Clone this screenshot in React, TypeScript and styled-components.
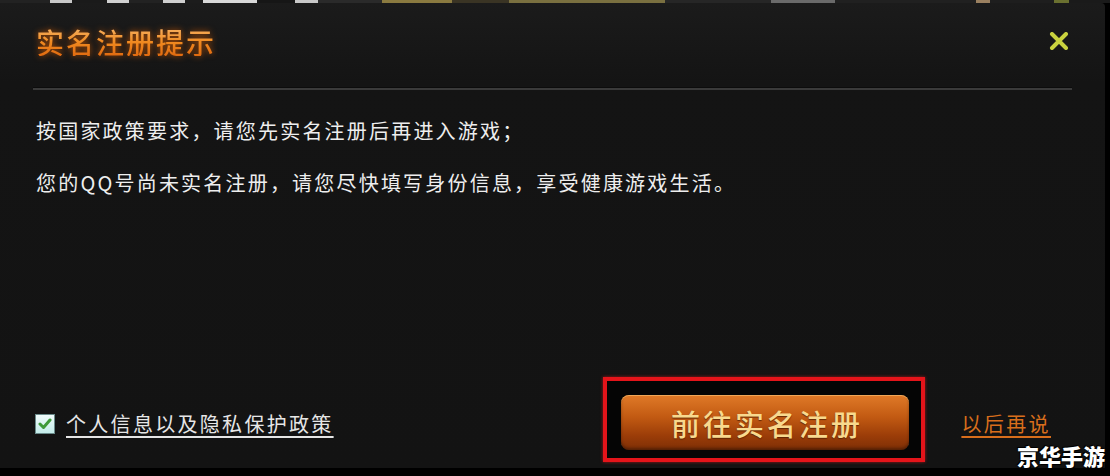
import React from "react";
import styled, { createGlobalStyle } from "styled-components";

const Global = createGlobalStyle`
  html, body { margin: 0; padding: 0; background: #000; }
  body { font-family: "Noto Sans CJK SC", "Noto Sans", sans-serif; }
`;

const Frame = styled.div`
  position: relative;
  width: 1110px;
  height: 476px;
  display: flex;
  flex-direction: column;
  background: #000;
  overflow: hidden;
`;

const TopStrip = styled.div`
  height: 3px;
  display: flex;
  background: #1a1a1a;
`;

const StripSeg = styled.div<{ $w: number; $c: string }>`
  width: ${(p) => p.$w}px;
  background: ${(p) => p.$c};
  flex: none;
`;

const MainRow = styled.div`
  flex: 1;
  display: flex;
  padding-right: 5px;
  padding-bottom: 8px;
`;

const Dialog = styled.div`
  flex: 1;
  display: flex;
  flex-direction: column;
  padding: 0 33px;
  background: linear-gradient(180deg, #1b1b1b 0px, #141414 80px, #131313 100%);
  border-top-right-radius: 4px;
`;

const Header = styled.div`
  height: 84px;
  display: flex;
  align-items: center;
  justify-content: space-between;
  padding: 0 2px 0 3px;
`;

const Title = styled.h1`
  margin: 0;
  font-size: 28px;
  line-height: 1;
  font-weight: 500;
  letter-spacing: 2px;
  color: #f08a22;
  background: linear-gradient(180deg, #f7b060 0%, #f08a20 50%, #e06a10 100%);
  -webkit-background-clip: text;
  background-clip: text;
  -webkit-text-fill-color: transparent;
  filter: drop-shadow(0 0 3px rgba(210, 90, 0, 0.9));
  position: relative;
  top: -3px;
`;

const CloseBtn = styled.button`
  width: 22px;
  height: 22px;
  padding: 0;
  border: none;
  background: transparent;
  display: flex;
  align-items: center;
  justify-content: center;
  position: relative;
  top: -4px;
  cursor: pointer;
`;

const Divider = styled.div`
  height: 2px;
  background: #3a3a3a;
  border-top: 1px solid #0c0c0c;
`;

const Body = styled.div`
  padding: 15px 0 0 3px;
  font-size: 20px;
  line-height: 52px;
  letter-spacing: 2.2px;
  color: #eeeeee;
`;

const Line = styled.p`
  margin: 0;
`;

const Footer = styled.div`
  margin-top: auto;
  display: flex;
  align-items: center;
  padding: 0 21px 6px 2px;
`;

const Agree = styled.label`
  flex: 1;
  display: flex;
  align-items: center;
  gap: 11px;
  padding-top: 8px;
`;

const CheckBox = styled.span`
  width: 20px;
  height: 20px;
  flex: none;
  background: linear-gradient(180deg, #f0fbfb, #c4ecea);
  border: 1px solid #6a8a8a;
  box-sizing: border-box;
  display: flex;
  align-items: center;
  justify-content: center;
`;

const AgreeText = styled.span`
  font-size: 20px;
  letter-spacing: 2.3px;
  color: #e6e6e6;
  text-decoration: underline;
  text-underline-offset: 4px;
`;

const Highlight = styled.div`
  border: 4px solid #e4141a;
  padding: 14px 12px 8px 14px;
  background: #050505;
  box-shadow: 0 0 3px rgba(255, 30, 30, 0.6);
`;

const MainButton = styled.button`
  width: 288px;
  height: 55px;
  border: none;
  border-radius: 8px;
  background: linear-gradient(180deg, #e07a28 0%, #c25a12 40%, #9a3c08 75%, #7e2f06 100%);
  box-shadow: inset 0 1px 0 rgba(255, 200, 120, 0.6), inset 0 -2px 3px rgba(0, 0, 0, 0.35);
  color: #f8d98e;
  font-family: "Noto Sans CJK SC", sans-serif;
  font-size: 29px;
  font-weight: 500;
  letter-spacing: 3px;
  text-shadow: 0 1px 1px rgba(80, 30, 0, 0.8);
  cursor: pointer;
  padding: 0 0 0 3px;
`;

const LaterLink = styled.a`
  margin-left: 36px;
  font-size: 20px;
  letter-spacing: 2.4px;
  color: #d86e1c;
  text-decoration: underline;
  text-underline-offset: 4px;
  padding-top: 8px;
  cursor: pointer;
`;

const Watermark = styled.div`
  position: absolute;
  right: 5px;
  bottom: 5px;
  font-size: 22px;
  font-weight: 900;
  color: #fff;
  text-shadow: 0 0 2px #000, 1px 1px 0 #000, -1px -1px 0 #000;
`;

const segments: Array<[number, string]> = [
  [50, "#222"],
  [22, "#c8c8c8"],
  [35, "#1a1a1a"],
  [22, "#d0d0d0"],
  [34, "#222"],
  [22, "#cfcfcf"],
  [18, "#1c1c1c"],
  [54, "#d8d8d8"],
  [38, "#161616"],
  [23, "#c8c8c8"],
  [64, "#2a2a2a"],
  [70, "#8a7a40"],
  [57, "#3a3424"],
  [156, "#7a7040"],
  [106, "#262626"],
  [64, "#6a6a6a"],
  [141, "#202020"],
  [14, "#9a8060"],
  [64, "#1e1e1e"],
  [15, "#6a7030"],
];

export default function App() {
  return (
    <>
      <Global />
      <Frame>
        <TopStrip>
          {segments.map(([w, c], i) => (
            <StripSeg key={i} $w={w} $c={c} />
          ))}
        </TopStrip>
        <MainRow>
          <Dialog>
            <Header>
              <Title>实名注册提示</Title>
              <CloseBtn aria-label="关闭">
                <svg width="20" height="18" viewBox="0 0 20 18">
                  <path
                    d="M3 2 L17 16 M17 2 L3 16"
                    stroke="#c9d23e"
                    strokeWidth="4"
                    strokeLinecap="round"
                  />
                </svg>
              </CloseBtn>
            </Header>
            <Divider />
            <Body>
              <Line>按国家政策要求，请您先实名注册后再进入游戏；</Line>
              <Line>您的QQ号尚未实名注册，请您尽快填写身份信息，享受健康游戏生活。</Line>
            </Body>
            <Footer>
              <Agree>
                <CheckBox>
                  <svg width="14" height="12" viewBox="0 0 14 12">
                    <path
                      d="M2 6 L5.5 9.5 L12 2"
                      stroke="#3f9a3a"
                      strokeWidth="3"
                      fill="none"
                      strokeLinecap="round"
                      strokeLinejoin="round"
                    />
                  </svg>
                </CheckBox>
                <AgreeText>个人信息以及隐私保护政策</AgreeText>
              </Agree>
              <Highlight>
                <MainButton>前往实名注册</MainButton>
              </Highlight>
              <LaterLink>以后再说</LaterLink>
            </Footer>
          </Dialog>
        </MainRow>
        <Watermark>京华手游</Watermark>
      </Frame>
    </>
  );
}
